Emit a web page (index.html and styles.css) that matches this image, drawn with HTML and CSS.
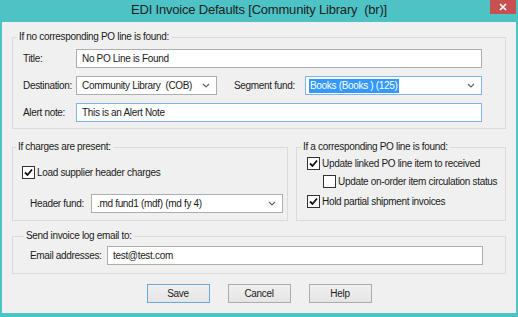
FILE: index.html
```html
<!DOCTYPE html>
<html lang="en">
<head>
    <meta charset="UTF-8">
    <title>EDI Invoice Defaults</title>
    <link rel="stylesheet" href="styles.css">
</head>
<body>

<div class="window">
    <div class="titlebar">
        <span></span>
        <span class="title">EDI Invoice Defaults [Community Library&nbsp; (br)]</span>
        <span class="close">
            <svg width="8" height="8" viewBox="0 0 8 8"><path d="M1 1L7 7M7 1L1 7" stroke="#fff" stroke-width="1.6"/></svg>
        </span>
    </div>

    <div class="client">
        <fieldset class="group group-main">
            <legend>If no corresponding PO line is found:</legend>
            <label class="lbl">Title:</label>
            <div class="field span3">No PO Line is Found</div>

            <label class="lbl">Destination:</label>
            <div class="field select">
                <span>Community Library&nbsp; (COB)</span>
                <svg class="chev" width="8" height="5" viewBox="0 0 8 5"><path d="M1 1L4 4L7 1" fill="none" stroke="#666" stroke-width="1.2"/></svg>
            </div>
            <label class="lbl lbl-seg">Segment fund:</label>
            <div class="field select focus">
                <span class="picked">Books (Books ) (125)</span>
                <svg class="chev" width="8" height="5" viewBox="0 0 8 5"><path d="M1 1L4 4L7 1" fill="none" stroke="#666" stroke-width="1.2"/></svg>
            </div>

            <label class="lbl">Alert note:</label>
            <div class="field span3 focus">This is an Alert Note</div>
        </fieldset>

        <div class="split">
            <fieldset class="group group-charges">
                <legend>If charges are present:</legend>
                <div class="check-row">
                    <span class="check on"><svg width="9" height="9" viewBox="0 0 9 9"><path d="M1 4.5L3.5 7L8 1.5" fill="none" stroke="#111" stroke-width="1.8"/></svg></span>
                    <span>Load supplier header charges</span>
                </div>
                <div class="fund-row">
                    <label class="lbl">Header fund:</label>
                    <div class="field select grow">
                        <span>.md fund1 (mdf) (md fy 4)</span>
                        <svg class="chev" width="8" height="5" viewBox="0 0 8 5"><path d="M1 1L4 4L7 1" fill="none" stroke="#666" stroke-width="1.2"/></svg>
                    </div>
                </div>
            </fieldset>

            <fieldset class="group group-po">
                <legend>If a corresponding PO line is found:</legend>
                <div class="check-row">
                    <span class="check on"><svg width="9" height="9" viewBox="0 0 9 9"><path d="M1 4.5L3.5 7L8 1.5" fill="none" stroke="#111" stroke-width="1.8"/></svg></span>
                    <span>Update linked PO line item to received</span>
                </div>
                <div class="check-row indent">
                    <span class="check"></span>
                    <span>Update on-order item circulation status</span>
                </div>
                <div class="check-row spaced">
                    <span class="check on"><svg width="9" height="9" viewBox="0 0 9 9"><path d="M1 4.5L3.5 7L8 1.5" fill="none" stroke="#111" stroke-width="1.8"/></svg></span>
                    <span>Hold partial shipment invoices</span>
                </div>
            </fieldset>
        </div>

        <fieldset class="group group-mail">
            <legend>Send invoice log email to:</legend>
            <div class="mail-row">
                <label class="lbl">Email addresses:</label>
                <div class="field grow">test@test.com</div>
            </div>
        </fieldset>

        <div class="buttons">
            <button class="btn default">Save</button>
            <button class="btn">Cancel</button>
            <button class="btn">Help</button>
        </div>
    </div>
</div>

</body>
</html>
```

FILE: styles.css
```css
body {
    margin: 0;
    font-family: 'Liberation Sans', Arial, sans-serif;
    font-size: 10px;
    letter-spacing: -0.32px;
    color: #1b1b1b;
}

.window {
    width: 518px;
    height: 317px;
    box-sizing: border-box;
    padding: 0 2px 4px 2px;
    background: #4ec3c5;
    display: flex;
    flex-direction: column;
}

.titlebar {
    height: 22px;
    display: grid;
    grid-template-columns: 1fr auto 1fr;
    align-items: start;
}

.title {
    font-size: 13px;
    letter-spacing: -0.2px;
    line-height: 20px;
    color: #1e1e1e;
}

.close {
    justify-self: end;
    width: 26px;
    height: 14px;
    background: #c75050;
    display: flex;
    align-items: center;
    justify-content: center;
}

.client {
    flex: 1;
    background: #f0f0f0;
    padding-top: 8px;
}

.group {
    border: 1px solid #d9dcde;
    margin: 0 10px;
    min-width: 0;
}

.group legend {
    line-height: 14px;
    padding: 0 2px;
    margin-left: -6px;
}

.group-main {
    display: grid;
    grid-template-columns: 53px 141px 88px 1fr;
    row-gap: 8px;
    padding: 5px 23px 6px 10px;
}

.span3 {
    grid-column: span 3;
}

.lbl {
    display: flex;
    align-items: center;
}

.lbl-seg {
    padding-left: 17px;
}

.field {
    height: 19px;
    box-sizing: border-box;
    border: 1px solid #abadb3;
    background: #fff;
    padding: 0 5px;
    display: flex;
    align-items: center;
    white-space: nowrap;
}

.field.focus {
    border-color: #7eb4ea;
}

.select {
    justify-content: space-between;
    padding-right: 6px;
}

.select .chev {
    flex: none;
}

.picked {
    background: #3399ff;
    color: #fff;
    padding: 0 1px;
    margin-left: -2px;
    line-height: 14px;
}

.grow {
    flex: 1;
}

.split {
    display: flex;
    gap: 8px;
    margin: 11px 10px 0 10px;
}

.split .group {
    margin: 0;
}

.group-charges {
    width: 276px;
    box-sizing: border-box;
    padding: 9px 4px 7px 9px;
}

.group-po {
    flex: 1;
    padding: 0 6px 9px 10px;
}

.check-row {
    display: flex;
    align-items: center;
    gap: 2px;
    height: 18px;
}

.check-row.indent {
    padding-left: 16px;
}

.check-row.spaced {
    margin-top: 2px;
}

.check {
    width: 13px;
    height: 13px;
    box-sizing: border-box;
    border: 1px solid #333;
    background: #fff;
    display: flex;
    align-items: center;
    justify-content: center;
}

.fund-row {
    display: flex;
    margin-top: 13px;
    padding-left: 8px;
}

.fund-row .lbl {
    width: 61px;
}

.group-mail {
    margin-top: 8px;
    padding: 3px 22px 8px 17px;
}

.mail-row {
    display: flex;
}

.mail-row .lbl {
    width: 77px;
}

.buttons {
    display: flex;
    justify-content: center;
    gap: 18px;
    margin-top: 10px;
}

.btn {
    width: 63px;
    height: 19px;
    padding: 0;
    font: inherit;
    letter-spacing: inherit;
    color: #1b1b1b;
    border: 1px solid #acacac;
    background: linear-gradient(#f0f0f0, #e5e5e5);
}

.btn.default {
    border-color: #6aa6e0;
}
```
